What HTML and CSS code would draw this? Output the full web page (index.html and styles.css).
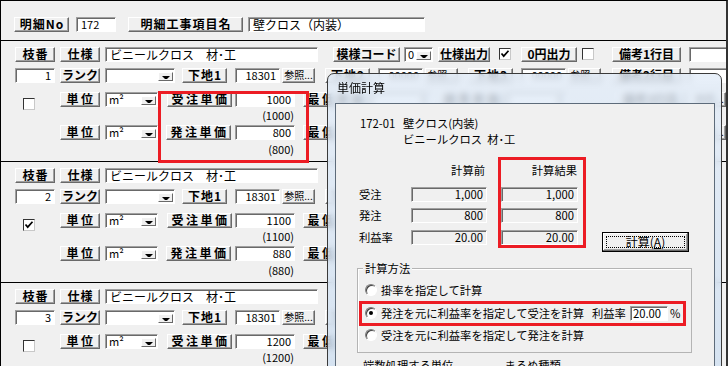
FILE: index.html
```html
<!DOCTYPE html>
<html lang="ja">

<head>
  <meta charset="UTF-8" />
  <title>明細 単価計算</title>
  <link rel="stylesheet" href="styles.css">
</head>

<body>
  <div class="win">
    <!-- 明細ヘッダー -->
    <div class="head">
      <span class="btn w55">明細No</span>
      <span class="fld num w40 ml7 left">172</span>
      <span class="btn w115 ml12">明細工事項目名</span>
      <span class="fld w177 ml5">壁クロス（内装）</span>
    </div>

    <!-- 枝番 1 -->
    <div class="sec">
      <div class="row">
        <span class="btn w40">枝番</span>
        <span class="btn w40 ml5">仕様</span>
        <span class="fld w213 ml5">ビニールクロス　材･工</span>
        <span class="btn w67 ml15 tight">模様コード</span>
        <span class="cmb w29 ml4"><i>0</i><b class="arr"></b></span>
        <span class="btn w52 ml5 tight">仕様出力</span>
        <span class="chk ml9 mt1"><svg width="10" height="10" viewBox="0 0 10 10"><path d="M1.5 4.5l2.2 2.6 4.8-5.4" fill="none" stroke="#000" stroke-width="1.7"/></svg></span>
        <span class="btn w56 ml10 tight">0円出力</span>
        <span class="chk ml5 mt1"></span>
        <span class="btn w69 ml18 tight">備考1行目</span>
        <span class="fld w60 ml8"></span>
      </div>
      <div class="row row-b">
        <span class="fld num w40">1</span>
        <span class="btn w40 ml5 tight">ランク</span>
        <span class="cmb w70 ml5"><i></i><b class="arr"></b></span>
        <span class="btn w45 ml7">下地1</span>
        <span class="fld num w45 ml8">18301</span>
        <span class="btn ref w33 ml2">参照...</span>
        <span class="btn w45 ml10">下地2</span>
        <span class="fld num w45 ml8">00000</span>
        <span class="btn ref w33 ml2">参照...</span>
        <span class="btn w45 ml10">下地3</span>
        <span class="fld num w45 ml8">00000</span>
        <span class="btn ref w33 ml2">参照...</span>
        <span class="btn w69 ml11 tight">備考2行目</span>
        <span class="fld w60 ml8"></span>
      </div>
      <div class="row row-c">
        <span class="chk ml8 mt6"></span>
        <span class="btn lg w40 ml25">単位</span>
        <span class="cmb w53 ml5"><i>m²</i><b class="arr"></b></span>
        <span class="btn lg w65 ml9">受注単価</span>
        <span class="fld num w60 ml3">1000</span>
        <span class="btn lg w65 ml8">最低単価</span>
        <span class="fld num w60 ml3">0</span>
        <span class="btn lg w65 ml8">標準単価</span>
        <span class="fld num w60 ml3">0</span>
        <span class="btn w69 ml49 tight">備考3行目</span>
        <span class="btn ref w33 ml8">参照...</span>
      </div>
      <div class="paren p1">(1000)</div>
      <div class="row row-e">
        <span class="btn lg w40 ml45">単位</span>
        <span class="cmb w53 ml5"><i>m²</i><b class="arr"></b></span>
        <span class="btn lg w65 ml8">発注単価</span>
        <span class="fld num w60 ml4">800</span>
        <span class="btn lg w65 ml8">最低単価</span>
        <span class="fld num w60 ml3">0</span>
        <span class="btn lg w65 ml8">標準単価</span>
        <span class="fld num w60 ml3">0</span>
        <span class="btn w69 ml49 tight">備考4行目</span>
        <span class="btn ref w33 ml8">参照...</span>
      </div>
      <div class="paren p2">(800)</div>
    </div>

    <!-- 枝番 2 -->
    <div class="sec">
      <div class="row">
        <span class="btn w40">枝番</span>
        <span class="btn w40 ml5">仕様</span>
        <span class="fld w213 ml5">ビニールクロス　材･工</span>
      </div>
      <div class="row row-b">
        <span class="fld num w40">2</span>
        <span class="btn w40 ml5 tight">ランク</span>
        <span class="cmb w70 ml5"><i></i><b class="arr"></b></span>
        <span class="btn w45 ml7">下地1</span>
        <span class="fld num w45 ml8">18301</span>
        <span class="btn ref w33 ml2">参照...</span>
        <span class="btn w45 ml10">下地2</span>
      </div>
      <div class="row row-c">
        <span class="chk ml8 mt6"><svg width="10" height="10" viewBox="0 0 10 10"><path d="M1.5 4.5l2.2 2.6 4.8-5.4" fill="none" stroke="#000" stroke-width="1.7"/></svg></span>
        <span class="btn lg w40 ml25">単位</span>
        <span class="cmb w53 ml5"><i>m²</i><b class="arr"></b></span>
        <span class="btn lg w65 ml9">受注単価</span>
        <span class="fld num w60 ml3">1100</span>
        <span class="btn lg w65 ml8">最低単価</span>
      </div>
      <div class="paren p1">(1100)</div>
      <div class="row row-e">
        <span class="btn lg w40 ml45">単位</span>
        <span class="cmb w53 ml5"><i>m²</i><b class="arr"></b></span>
        <span class="btn lg w65 ml8">発注単価</span>
        <span class="fld num w60 ml4">880</span>
        <span class="btn lg w65 ml8">最低単価</span>
      </div>
      <div class="paren p2">(880)</div>
    </div>

    <!-- 枝番 3 -->
    <div class="sec">
      <div class="row">
        <span class="btn w40">枝番</span>
        <span class="btn w40 ml5">仕様</span>
        <span class="fld w213 ml5">ビニールクロス　材･工</span>
      </div>
      <div class="row row-b">
        <span class="fld num w40">3</span>
        <span class="btn w40 ml5 tight">ランク</span>
        <span class="cmb w70 ml5"><i></i><b class="arr"></b></span>
        <span class="btn w45 ml7">下地1</span>
        <span class="fld num w45 ml8">18301</span>
        <span class="btn ref w33 ml2">参照...</span>
        <span class="btn w45 ml10">下地2</span>
      </div>
      <div class="row row-c">
        <span class="chk ml8 mt6"></span>
        <span class="btn lg w40 ml25">単位</span>
        <span class="cmb w53 ml5"><i>m²</i><b class="arr"></b></span>
        <span class="btn lg w65 ml9">受注単価</span>
        <span class="fld num w60 ml3">1200</span>
        <span class="btn lg w65 ml8">最低単価</span>
      </div>
      <div class="paren p1">(1200)</div>
    </div>

    <!-- 受注単価・発注単価の強調枠 -->
    <div class="mark mark-price"></div>

    <!-- 単価計算ダイアログ -->
    <div class="dlg">
      <div class="dlg-title">単価計算</div>
      <div class="dlg-body">
        <div class="info">
          <span>172-01</span><span>壁クロス(内装)</span>
          <span></span><span>ビニールクロス&nbsp; 材･工</span>
        </div>

        <div class="trow thead">
          <span class="lab"></span>
          <span class="cell">計算前</span>
          <span class="cell cell2">計算結果</span>
        </div>
        <div class="trow r1">
          <span class="lab">受注</span>
          <span class="ro">1,000</span>
          <span class="ro cell2">1,000</span>
        </div>
        <div class="trow r2">
          <span class="lab">発注</span>
          <span class="ro">800</span>
          <span class="ro cell2">800</span>
        </div>
        <div class="trow r3">
          <span class="lab">利益率</span>
          <span class="ro">20.00</span>
          <span class="ro cell2">20.00</span>
          <span class="calc">計算(<u>A</u>)</span>
        </div>

        <div class="group">
          <div class="legend">計算方法</div>
          <div class="opt o1"><span class="rad"></span>掛率を指定して計算</div>
          <div class="opt o2">
            <span class="rad"><b></b></span>発注を元に利益率を指定して受注を計算
            <span class="rate">利益率</span>
            <span class="edit">20.00</span>
            <span class="pct">%</span>
          </div>
          <div class="opt o3"><span class="rad"></span>受注を元に利益率を指定して発注を計算</div>
        </div>

        <div class="more">
          <span>端数処理する単位</span>
          <span class="kind">まるめ種類</span>
        </div>

        <!-- 計算結果・計算方法の強調枠 -->
        <div class="mark mark-result"></div>
        <div class="mark mark-method"></div>
      </div>
    </div>
  </div>
</body>

</html>
```

FILE: styles.css
```css
/* 全体 */
* {
  box-sizing: border-box;
}

body {
  margin: 0;
  background: #f0f0f0;
  font-family: "Noto Sans CJK JP", sans-serif;
  font-size: 12px;
  color: #000;
}

/* 明細ウィンドウ */
.win {
  position: relative;
  width: 728px;
  height: 366px;
  overflow: hidden;
  border-top: 1px solid #000;
  border-left: 1px solid #000;
  border-right: 2px solid #333;
}

/* ヘッダー行 */
.head {
  display: flex;
  align-items: flex-start;
  height: 39px;
  padding: 16px 0 0 13px;
}

.head > * {
  flex-shrink: 0;
}

/* 枝番ごとのブロック */
.sec {
  height: 121px;
  border-top: 1px solid #000;
  padding: 6px 0 0 14px;
}

.row {
  display: flex;
  align-items: flex-start;
  height: 15px;
}

.row > * {
  flex-shrink: 0;
}

.row-b { margin-top: 6px; }
.row-c { margin-top: 9px; }
.row-e { margin-top: 4px; }

/* (1000) などの前回値 */
.paren {
  width: 279px;
  height: 12px;
  font-size: 11px;
  line-height: 12px;
  text-align: right;
}

.p1 { margin-top: 2px; }
.p2 { margin-top: 3px; }

/* ボタン */
.btn {
  display: flex;
  align-items: center;
  justify-content: center;
  height: 15px;
  padding: 0 0 2px 1px;
  border: 1px solid;
  border-color: #fff #696969 #696969 #fff;
  box-shadow: inset -1px -1px #a0a0a0;
  background: #f0f0f0;
  font-size: 12px;
  font-weight: bold;
  letter-spacing: 1px;
  line-height: 12px;
  white-space: nowrap;
}

.btn.lg {
  padding-left: 2px;
  letter-spacing: 2.5px;
}

.btn.tight {
  padding-left: 0;
  letter-spacing: 0;
}

.btn.ref {
  padding-left: 0;
  font-size: 10px;
  font-weight: normal;
  letter-spacing: 0;
}

/* 入力欄 */
.fld {
  height: 15px;
  border: 1px solid;
  border-color: #a0a0a0 #fff #fff #a0a0a0;
  box-shadow: inset 1px 1px #696969;
  background: #fff;
  padding: 0 3px 0 4px;
  line-height: 13px;
  white-space: nowrap;
  overflow: hidden;
}

.num {
  font-size: 11px;
  text-align: right;
}

.num.left {
  text-align: left;
}

/* コンボボックス */
.cmb {
  display: flex;
  justify-content: space-between;
  height: 15px;
  border: 1px solid;
  border-color: #a0a0a0 #fff #fff #a0a0a0;
  box-shadow: inset 1px 1px #696969;
  background: #fff;
  padding: 0 1px 1px 3px;
}

.cmb i {
  font-style: normal;
  font-size: 11px;
  line-height: 12px;
}

.arr {
  display: flex;
  align-self: flex-end;
  align-items: flex-end;
  justify-content: center;
  width: 15px;
  height: 9px;
  padding-bottom: 1px;
  border: 1px solid;
  border-color: #fff #696969 #696969 #fff;
  background: #f0f0f0;
}

.arr::after {
  content: "";
  width: 2px;
  border-top: 3px solid #000;
  border-left: 3px solid transparent;
  border-right: 3px solid transparent;
}

/* チェックボックス */
.chk {
  display: flex;
  align-items: center;
  justify-content: center;
  width: 12px;
  height: 12px;
  border: 1px solid;
  border-color: #333 #c8c8c8 #c8c8c8 #333;
  background: #fff;
}

/* 幅 */
.w29 { width: 29px; }
.w33 { width: 33px; }
.w40 { width: 40px; }
.w45 { width: 45px; }
.w52 { width: 52px; }
.w53 { width: 53px; }
.w55 { width: 55px; }
.w56 { width: 56px; }
.w60 { width: 60px; }
.w65 { width: 65px; }
.w67 { width: 67px; }
.w69 { width: 69px; }
.w70 { width: 70px; }
.w115 { width: 115px; }
.w177 { width: 177px; }
.w213 { width: 213px; }

/* 間隔 */
.ml2 { margin-left: 2px; }
.ml3 { margin-left: 3px; }
.ml4 { margin-left: 4px; }
.ml5 { margin-left: 5px; }
.ml7 { margin-left: 7px; }
.ml8 { margin-left: 8px; }
.ml9 { margin-left: 9px; }
.ml10 { margin-left: 10px; }
.ml11 { margin-left: 11px; }
.ml12 { margin-left: 12px; }
.ml15 { margin-left: 15px; }
.ml18 { margin-left: 18px; }
.ml25 { margin-left: 25px; }
.ml45 { margin-left: 45px; }
.ml49 { margin-left: 49px; }
.mt1 { margin-top: 1px; }
.mt6 { margin-top: 6px; }

/* 赤い強調枠 */
.mark {
  position: absolute;
  border: 3px solid #ec1c24;
}

.mark-price {
  left: 157px;
  top: 90px;
  width: 151px;
  height: 72px;
}

/* 単価計算ダイアログ（Aero枠） */
.dlg {
  position: absolute;
  left: 326px;
  top: 72px;
  width: 395px;
  height: 320px;
  padding: 0 6px 0 7px;
  border: 1px solid #3a3a3a;
  border-radius: 7px 7px 0 0;
  background: linear-gradient(rgba(226, 236, 248, 0.8), rgba(205, 222, 240, 0.8));
  backdrop-filter: blur(3px);
}

.dlg-title {
  height: 29px;
  padding-left: 2px;
  line-height: 27px;
  font-size: 12px;
}

.dlg-body {
  position: relative;
  height: 300px;
  border: 1px solid #5d6b7a;
  background: #f0f0f0;
  font-size: 11.3px;
}

.info {
  display: grid;
  grid-template-columns: 43px auto;
  padding: 11px 0 0 24px;
  line-height: 16px;
}

/* 計算前・計算結果の表 */
.trow {
  display: flex;
  align-items: flex-start;
  height: 15px;
  padding-left: 23px;
  line-height: 15px;
}

.thead {
  margin-top: 16px;
  height: 14px;
  line-height: 14px;
}

.r1 { margin-top: 10px; }
.r2 { margin-top: 6px; }
.r3 { margin-top: 7px; }

.lab {
  width: 52px;
}

.cell {
  width: 76px;
  padding-right: 2px;
  text-align: right;
}

.cell2 {
  width: 77px;
  margin-left: 14px;
  padding-right: 1px;
}

.ro {
  width: 76px;
  height: 15px;
  padding-right: 3px;
  border: 1px solid;
  border-color: #a0a0a0 #fff #fff #a0a0a0;
  box-shadow: inset 1px 1px #696969;
  background: #f0f0f0;
  line-height: 13px;
  text-align: right;
}

.ro.cell2 {
  width: 77px;
}

.calc {
  flex-shrink: 0;
  width: 87px;
  height: 20px;
  margin: 2px 0 0 24px;
  border: 1px solid #000;
  box-shadow: inset -1px -1px #696969, inset 1px 1px #fff, inset -2px -2px #a0a0a0;
  outline: 1px dotted #000;
  outline-offset: -5px;
  font-size: 12px;
  line-height: 18px;
  text-align: center;
}

/* 計算方法グループ */
.group {
  width: 335px;
  height: 85px;
  margin: 23px 0 0 21px;
  border: 1px solid #b4b4b4;
  box-shadow: inset 1px 1px #fff;
}

.legend {
  display: table;
  margin: -8px 0 0 5px;
  padding: 0 2px;
  background: #f0f0f0;
  line-height: 14px;
  font-size: 11.3px;
}

.opt {
  display: flex;
  align-items: center;
  height: 16px;
  padding-left: 7px;
  white-space: nowrap;
}

.o1 { margin-top: 7px; }
.o2 { margin-top: 7px; }
.o3 { margin-top: 6px; }

.rad {
  display: flex;
  flex-shrink: 0;
  align-items: center;
  justify-content: center;
  width: 12px;
  height: 12px;
  margin-right: 4px;
  border: 1px solid;
  border-color: #7a7a7a #fff #fff #7a7a7a;
  border-radius: 50%;
  box-shadow: inset 1px 1px #404040;
  background: #fff;
}

.rad b {
  width: 4px;
  height: 4px;
  border-radius: 50%;
  background: #000;
}

.rate {
  margin-left: 8px;
}

.edit {
  width: 38px;
  height: 15px;
  margin-left: 4px;
  padding-left: 2px;
  border: 1px solid;
  border-color: #a0a0a0 #fff #fff #a0a0a0;
  box-shadow: inset 1px 1px #696969;
  background: #fff;
  line-height: 13px;
}

.pct {
  margin-left: 2px;
}

.more {
  display: flex;
  margin-top: 5px;
  padding-left: 27px;
  line-height: 14px;
}

.kind {
  margin-left: 51px;
}

.mark-result {
  left: 162px;
  top: 53px;
  width: 88px;
  height: 91px;
}

.mark-method {
  left: 23px;
  top: 197px;
  width: 327px;
  height: 25px;
}
```
